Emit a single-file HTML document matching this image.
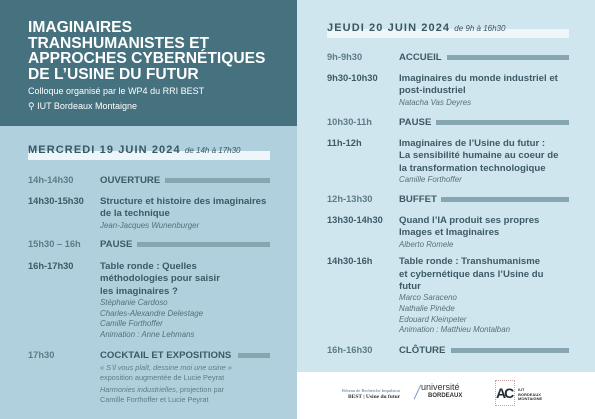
<!DOCTYPE html>
<html><head><meta charset="utf-8"><style>
*{margin:0;padding:0;box-sizing:border-box}
body{width:595px;height:419px;position:relative;overflow:hidden;background:#fff;font-family:"Liberation Sans",sans-serif;color:#3d5a66}
.a{position:absolute;white-space:nowrap}
.t{font-size:9.3px;font-weight:bold;color:#3d5a66}
.g{color:#5d7c88;font-weight:bold}
.c{font-size:9.6px;font-weight:bold;color:#3d5a66}
.i{font-size:7.9px;font-style:italic;color:#56707a}
.bar{position:absolute;height:5px;background:#86a6b2}
.h{font-size:11px;font-weight:bold;letter-spacing:1.1px;color:#3a5662}
.hb{position:absolute;height:9px;background:#eef6f9}
</style></head><body>
<div class="a" style="left:0;top:0;width:297px;height:126px;background:#46717f"></div>
<div class="a" style="left:0;top:126px;width:297px;height:293px;background:#afd0dc"></div>
<div class="a" style="left:297px;top:0;width:298px;height:372px;background:#cfe6ee"></div>

<div class="a" style="left:28px;top:20px;color:#fff;font-weight:bold;font-size:15.6px;line-height:15.6px">IMAGINAIRES<br>TRANSHUMANISTES ET<br>APPROCHES CYBERNÉTIQUES<br>DE L’USINE DU FUTUR</div>
<div class="a" style="left:28px;top:86px;color:#fff;font-size:9px">Colloque organisé par le WP4 du RRI BEST</div>
<div class="a" style="left:28px;top:101px;color:#fff;font-size:9px">⚲ IUT Bordeaux Montaigne</div>

<div class="hb" style="left:28px;top:151px;width:242px"></div>
<div class="a h" style="left:28px;top:144px">MERCREDI 19 JUIN 2024 <span style="font-size:8px;font-style:italic;font-weight:normal;letter-spacing:0">de 14h à 17h30</span></div>

<div class="a t g" style="left:28px;top:175px">14h-14h30</div><div class="a c g" style="left:100px;top:175px">OUVERTURE</div><div class="bar" style="left:165px;top:178px;width:105px"></div>
<div class="a t" style="left:28px;top:196px">14h30-15h30</div><div class="a c" style="left:100px;top:196px;line-height:12px">Structure et histoire des imaginaires<br>de la technique</div>
<div class="a i" style="left:100px;top:221px">Jean-Jacques Wunenburger</div>
<div class="a t g" style="left:28px;top:239px">15h30 – 16h</div><div class="a c g" style="left:100px;top:239px">PAUSE</div><div class="bar" style="left:137px;top:242px;width:133px"></div>
<div class="a t" style="left:28px;top:261px">16h-17h30</div><div class="a c" style="left:100px;top:261px;line-height:12.3px">Table ronde : Quelles<br>méthodologies pour saisir<br>les imaginaires ?</div>
<div class="a i" style="left:100px;top:298px;line-height:10.6px">Stéphanie Cardoso<br>Charles-Alexandre Delestage<br>Camille Forthoffer<br>Animation : Anne Lehmans</div>
<div class="a t g" style="left:28px;top:350px">17h30</div><div class="a c g" style="left:100px;top:350px">COCKTAIL ET EXPOSITIONS</div><div class="bar" style="left:238px;top:353px;width:32px"></div>
<div class="a" style="left:100px;top:363px;font-size:7.3px;color:#607c87;line-height:10px"><i>« S’il vous plaît, dessine moi une usine »</i><br>exposition augmentée de Lucie Peyrat</div>
<div class="a" style="left:100px;top:385px;font-size:7.3px;color:#607c87;line-height:10px"><i>Harmonies industrielles</i>, projection par<br>Camille Forthoffer et Lucie Peyrat</div>

<div class="hb" style="left:327px;top:29px;width:242px"></div>
<div class="a h" style="left:327px;top:22px">JEUDI 20 JUIN 2024 <span style="font-size:8px;font-style:italic;font-weight:normal;letter-spacing:0">de 9h à 16h30</span></div>

<div class="a t g" style="left:327px;top:52px">9h-9h30</div><div class="a c g" style="left:399px;top:52px">ACCUEIL</div><div class="bar" style="left:447px;top:55px;width:122px"></div>
<div class="a t" style="left:327px;top:73px">9h30-10h30</div><div class="a c" style="left:399px;top:73px;line-height:12.3px">Imaginaires du monde industriel et<br>post-industriel</div>
<div class="a i" style="left:399px;top:98px">Natacha Vas Deyres</div>
<div class="a t g" style="left:327px;top:117px">10h30-11h</div><div class="a c g" style="left:399px;top:117px">PAUSE</div><div class="bar" style="left:436px;top:120px;width:133px"></div>
<div class="a t" style="left:327px;top:138px">11h-12h</div><div class="a c" style="left:399px;top:138px;line-height:12.3px">Imaginaires de l’Usine du futur :<br>La sensibilité humaine au coeur de<br>la transformation technologique</div>
<div class="a i" style="left:399px;top:175px">Camille Forthoffer</div>
<div class="a t g" style="left:327px;top:194px">12h-13h30</div><div class="a c g" style="left:399px;top:194px">BUFFET</div><div class="bar" style="left:441px;top:197px;width:128px"></div>
<div class="a t" style="left:327px;top:215px">13h30-14h30</div><div class="a c" style="left:399px;top:215px;line-height:12.3px">Quand l’IA produit ses propres<br>Images et Imaginaires</div>
<div class="a i" style="left:399px;top:240px">Alberto Romele</div>
<div class="a t" style="left:327px;top:256px">14h30-16h</div><div class="a c" style="left:399px;top:256px;line-height:12.5px">Table ronde : Transhumanisme<br>et cybernétique dans l’Usine du<br>futur</div>
<div class="a i" style="left:399px;top:293px;line-height:10.8px">Marco Saraceno<br>Nathalie Pinède<br>Edouard Kleinpeter<br>Animation : Matthieu Montalban</div>
<div class="a t g" style="left:327px;top:345px">16h-16h30</div><div class="a c g" style="left:399px;top:345px">CLÔTURE</div><div class="bar" style="left:451px;top:348px;width:118px"></div>

<div class="a" style="left:342px;top:388px;font-family:'Liberation Serif',serif;font-size:4.5px;color:#4a6fa0">Réseau de Recherche Impulsion</div>
<div class="a" style="left:348px;top:394px;font-family:'Liberation Serif',serif;font-size:5.5px;font-weight:bold;color:#333">BEST | Usine du futur</div>
<div class="a" style="left:417px;top:384px;width:1px;height:16px;background:#7aa0c8;transform:rotate(25deg)"></div>
<div class="a" style="left:421px;top:382px;font-size:9px;color:#333">université</div>
<div class="a" style="left:428px;top:393px;font-size:6px;font-weight:bold;color:#333">BORDEAUX</div>
<div class="a" style="left:495px;top:380px;width:20px;height:26px;border:1px dotted #c8a0a0"></div>
<div class="a" style="left:496px;top:385px;font-size:14px;font-weight:bold;color:#1f2a33;letter-spacing:-2px">AC</div>
<div class="a" style="left:518px;top:388px;font-size:4px;font-weight:bold;color:#333;line-height:4.5px">IUT<br>BORDEAUX<br>MONTAIGNE</div>
</body></html>
